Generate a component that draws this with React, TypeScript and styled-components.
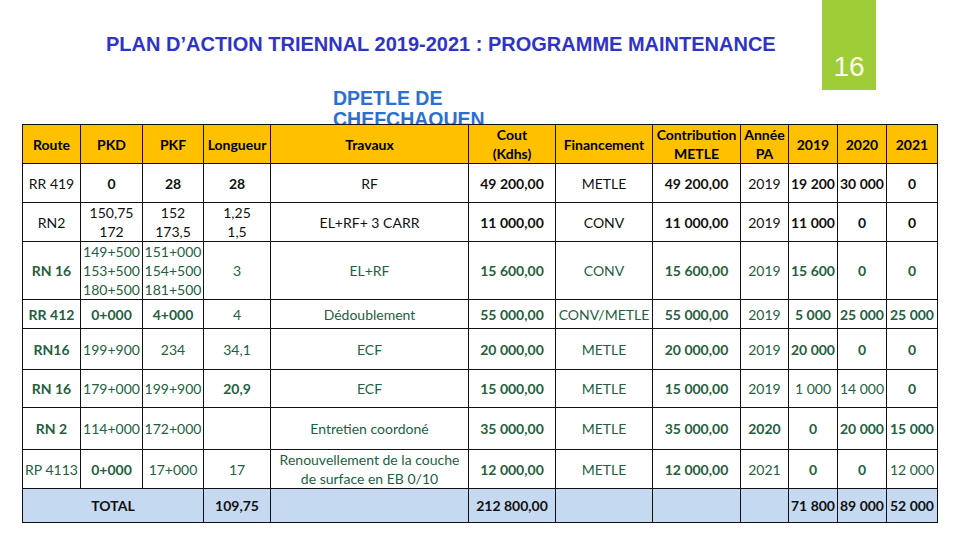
import React from "react";
import styled, { createGlobalStyle } from "styled-components";

const Global = createGlobalStyle`
  html, body { margin: 0; padding: 0; background: #ffffff; }
  body { width: 960px; height: 540px; overflow: hidden; }
`;

const Page = styled.div`
  width: 960px;
  height: 540px;
  background: #ffffff;
  display: flex;
  flex-direction: column;
`;

const TopBar = styled.header`
  display: flex;
  align-items: flex-start;
  height: 90px;
`;

const Title = styled.h1`
  margin: 34px 0 0 106px;
  font-family: "Liberation Sans", Arial, sans-serif;
  font-weight: 700;
  font-size: 20px;
  line-height: 20px;
  color: #3034c4;
  white-space: nowrap;
`;

const PageBadge = styled.div`
  margin-left: auto;
  margin-right: 84px;
  width: 54px;
  height: 90px;
  background: #9fcd37;
  display: flex;
  align-items: flex-end;
  justify-content: center;
  padding-bottom: 7px;
  box-sizing: border-box;
  font-family: "Liberation Sans", Arial, sans-serif;
  font-size: 28px;
  font-weight: 400;
  color: #fbfbe8;
`;

const Subtitle = styled.div`
  margin: -2px 0 0 333px;
  height: 36px;
  overflow: hidden;
  font-family: "Liberation Sans", Arial, sans-serif;
  font-weight: 700;
  font-size: 19.5px;
  line-height: 21px;
  color: #2b6fd2;
`;

const Table = styled.table`
  margin-left: 22px;
  border-collapse: collapse;
  table-layout: fixed;
  width: 915px;
  font-family: Lato, "Open Sans", sans-serif;
  font-size: 14px;
`;

const Row = styled.tr<{ $h: number; $tone: "head" | "black" | "green" | "total" }>`
  height: ${(p) => p.$h}px;
  background: ${(p) =>
    p.$tone === "head" ? "#ffc000" : p.$tone === "total" ? "#c5d9f1" : "#ffffff"};
  color: ${(p) => (p.$tone === "green" ? "#23603f" : "#111111")};
`;

const Cell = styled.td<{ $bold?: boolean }>`
  border: 1px solid #111;
  padding: 0;
  text-align: center;
  vertical-align: middle;
  white-space: pre;
  line-height: 19px;
  font-weight: ${(p) => (p.$bold ? 700 : 400)};
  overflow: hidden;
`;

const HeadCell = styled.th`
  border: 1px solid #111;
  padding: 0;
  text-align: center;
  vertical-align: middle;
  white-space: pre;
  line-height: 19px;
  font-weight: 700;
  color: #000;
`;

const widths = [58, 62, 61, 67, 198, 87, 97, 88, 48, 49, 49, 51];

const headers = [
  "Route",
  "PKD",
  "PKF",
  "Longueur",
  "Travaux",
  "Cout\n(Kdhs)",
  "Financement",
  "Contribution\nMETLE",
  "Année\nPA",
  "2019",
  "2020",
  "2021",
];

type C = { t: string; b?: boolean; span?: number };
type R = { h: number; tone: "black" | "green" | "total"; cells: C[] };

const B = (t: string): C => ({ t, b: true });
const N = (t: string): C => ({ t });

const rows: R[] = [
  {
    h: 39,
    tone: "black",
    cells: [N("RR 419"), B("0"), B("28"), B("28"), N("RF"), B("49 200,00"), N("METLE"), B("49 200,00"), N("2019"), B("19 200"), B("30 000"), B("0")],
  },
  {
    h: 39,
    tone: "black",
    cells: [N("RN2"), N("150,75\n172"), N("152\n173,5"), N("1,25\n1,5"), N("EL+RF+ 3 CARR"), B("11 000,00"), N("CONV"), B("11 000,00"), N("2019"), B("11 000"), B("0"), B("0")],
  },
  {
    h: 58,
    tone: "green",
    cells: [B("RN 16"), N("149+500\n153+500\n180+500"), N("151+000\n154+500\n181+500"), N("3"), N("EL+RF"), B("15 600,00"), N("CONV"), B("15 600,00"), N("2019"), B("15 600"), B("0"), B("0")],
  },
  {
    h: 29,
    tone: "green",
    cells: [B("RR 412"), B("0+000"), B("4+000"), N("4"), N("Dédoublement"), B("55 000,00"), N("CONV/METLE"), B("55 000,00"), N("2019"), B("5 000"), B("25 000"), B("25 000")],
  },
  {
    h: 41,
    tone: "green",
    cells: [B("RN16"), N("199+900"), N("234"), N("34,1"), N("ECF"), B("20 000,00"), N("METLE"), B("20 000,00"), N("2019"), B("20 000"), B("0"), B("0")],
  },
  {
    h: 38,
    tone: "green",
    cells: [B("RN 16"), N("179+000"), N("199+900"), B("20,9"), N("ECF"), B("15 000,00"), N("METLE"), B("15 000,00"), N("2019"), N("1 000"), N("14 000"), B("0")],
  },
  {
    h: 42,
    tone: "green",
    cells: [B("RN 2"), N("114+000"), N("172+000"), N(""), N("Entretien coordoné"), B("35 000,00"), N("METLE"), B("35 000,00"), B("2020"), B("0"), B("20 000"), B("15 000")],
  },
  {
    h: 39,
    tone: "green",
    cells: [N("RP 4113"), B("0+000"), N("17+000"), N("17"), N("Renouvellement de la couche\nde surface en EB 0/10"), B("12 000,00"), N("METLE"), B("12 000,00"), N("2021"), B("0"), B("0"), N("12 000")],
  },
  {
    h: 34,
    tone: "total",
    cells: [
      { t: "TOTAL", b: true, span: 3 },
      B("109,75"),
      N(""),
      B("212 800,00"),
      N(""),
      N(""),
      N(""),
      B("71 800"),
      B("89 000"),
      B("52 000"),
    ],
  },
];

export default function App() {
  return (
    <>
      <Global />
      <Page>
        <TopBar>
          <Title>PLAN D’ACTION TRIENNAL 2019-2021 : PROGRAMME MAINTENANCE</Title>
          <PageBadge>16</PageBadge>
        </TopBar>
        <Subtitle>
          DPETLE DE
          <br />
          CHEFCHAOUEN
        </Subtitle>
        <Table>
          <colgroup>
            {widths.map((w, i) => (
              <col key={i} style={{ width: w }} />
            ))}
          </colgroup>
          <thead>
            <Row $h={39} $tone="head">
              {headers.map((h) => (
                <HeadCell key={h}>{h}</HeadCell>
              ))}
            </Row>
          </thead>
          <tbody>
            {rows.map((r, i) => (
              <Row key={i} $h={r.h} $tone={r.tone}>
                {r.cells.map((c, j) => (
                  <Cell key={j} $bold={c.b} colSpan={c.span}>
                    {c.t}
                  </Cell>
                ))}
              </Row>
            ))}
          </tbody>
        </Table>
      </Page>
    </>
  );
}
